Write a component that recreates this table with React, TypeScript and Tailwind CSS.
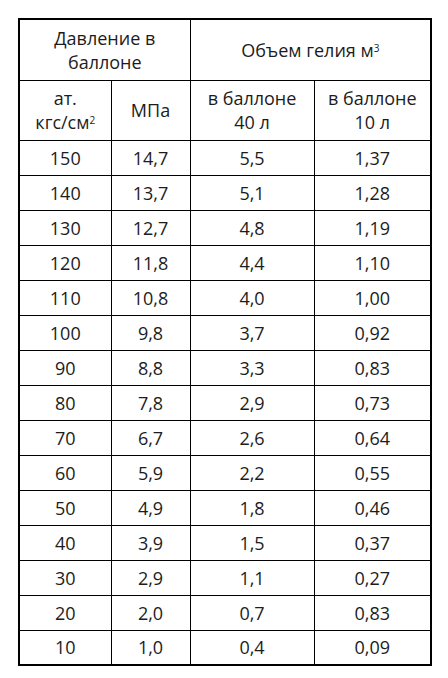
const rows: [string, string, string, string][] = [
  ["150", "14,7", "5,5", "1,37"],
  ["140", "13,7", "5,1", "1,28"],
  ["130", "12,7", "4,8", "1,19"],
  ["120", "11,8", "4,4", "1,10"],
  ["110", "10,8", "4,0", "1,00"],
  ["100", "9,8", "3,7", "0,92"],
  ["90", "8,8", "3,3", "0,83"],
  ["80", "7,8", "2,9", "0,73"],
  ["70", "6,7", "2,6", "0,64"],
  ["60", "5,9", "2,2", "0,55"],
  ["50", "4,9", "1,8", "0,46"],
  ["40", "3,9", "1,5", "0,37"],
  ["30", "2,9", "1,1", "0,27"],
  ["20", "2,0", "0,7", "0,83"],
  ["10", "1,0", "0,4", "0,09"],
];

const cell = "border border-black text-center align-middle p-0";

const App = () => {
  return (
    <div className="min-h-[678px] w-[448px] bg-white pl-[18px] pt-[18px] font-['Open_Sans',sans-serif] text-[18px] leading-[24px] text-[#1c1c1c]">
      <table className="w-[412px] table-fixed border-collapse border-2 border-black">
        <colgroup>
          <col className="w-[92px]" />
          <col className="w-[79px]" />
          <col className="w-[124px]" />
          <col className="w-[117px]" />
        </colgroup>
        <thead>
          <tr className="h-[61px]">
            <th colSpan={2} className={`${cell} font-normal`}>
              Давление в
              <br />
              баллоне
            </th>
            <th colSpan={2} className={`${cell} font-normal`}>
              Объем гелия м<sup className="text-[10px]">3</sup>
            </th>
          </tr>
          <tr className="h-[60px]">
            <th className={`${cell} font-normal`}>
              ат.
              <br />
              кгс/см<sup className="text-[10px]">2</sup>
            </th>
            <th className={`${cell} font-normal`}>МПа</th>
            <th className={`${cell} font-normal`}>
              в баллоне
              <br />
              40 л
            </th>
            <th className={`${cell} font-normal`}>
              в баллоне
              <br />
              10 л
            </th>
          </tr>
        </thead>
        <tbody>
          {rows.map((r) => (
            <tr key={r[0]} className="h-[35px]">
              {r.map((v, i) => (
                <td key={i} className={cell}>
                  {v}
                </td>
              ))}
            </tr>
          ))}
        </tbody>
      </table>
    </div>
  );
};

export default App;
